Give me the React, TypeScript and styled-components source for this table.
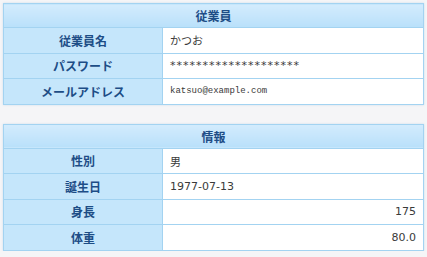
import styled, { createGlobalStyle } from "styled-components";

const GlobalStyle = createGlobalStyle`
  html, body {
    margin: 0;
    padding: 0;
    background: #f5f5f7;
  }
`;

const Page = styled.div`
  display: flex;
  flex-direction: column;
  gap: 19px;
  padding: 3px 3px 0 3px;
  font-family: "DejaVu Sans", "Noto Sans CJK JP", sans-serif;
`;

const Table = styled.table`
  width: 421px;
  border-collapse: collapse;
  background: #fff;
  border: 1px solid #94ccee;
  box-shadow: 0 0 2px rgba(150, 190, 220, 0.4);
`;

const HeadCell = styled.th`
  height: 23px;
  padding: 0;
  border: 1px solid #a3d3f1;
  background: linear-gradient(#d3ecfd, #b9e0fa);
  color: #1d4d86;
  font-family: "Noto Sans CJK JP", sans-serif;
  font-size: 12px;
  font-weight: bold;
  text-align: center;
`;

const Label = styled.th`
  width: 158px;
  height: 24.5px;
  padding: 0;
  border: 1px solid #a3d3f1;
  background: #c5e6fb;
  color: #1d4d86;
  font-family: "Noto Sans CJK JP", sans-serif;
  font-size: 12px;
  font-weight: bold;
  text-align: center;
`;

const Value = styled.td<{ $mono?: boolean; $right?: boolean; $masked?: boolean }>`
  height: 24.5px;
  padding: 0 7px;
  border: 1px solid #a3d3f1;
  background: #fff;
  color: #3a3a3a;
  font-family: ${(p) =>
    p.$mono ? '"Liberation Mono", monospace' : '"DejaVu Sans", "Noto Sans CJK JP", sans-serif'};
  font-size: ${(p) => (p.$mono ? "9px" : "11px")};
  letter-spacing: ${(p) => (p.$masked ? "1px" : "0")};
  text-align: ${(p) => (p.$right ? "right" : "left")};
`;

type Row = { label: string; value: string; mono?: boolean; right?: boolean; masked?: boolean };

const Section = ({ title, rows }: { title: string; rows: Row[] }) => (
  <Table>
    <tbody>
      <tr>
        <HeadCell colSpan={2}>{title}</HeadCell>
      </tr>
      {rows.map((r) => (
        <tr key={r.label}>
          <Label>{r.label}</Label>
          <Value $mono={r.mono} $right={r.right} $masked={r.masked}>
            {r.value}
          </Value>
        </tr>
      ))}
    </tbody>
  </Table>
);

const App = () => (
  <>
    <GlobalStyle />
    <Page>
      <Section
        title="従業員"
        rows={[
          { label: "従業員名", value: "かつお" },
          { label: "パスワード", value: "********************", masked: true },
          { label: "メールアドレス", value: "katsuo@example.com", mono: true },
        ]}
      />
      <Section
        title="情報"
        rows={[
          { label: "性別", value: "男" },
          { label: "誕生日", value: "1977-07-13" },
          { label: "身長", value: "175", right: true },
          { label: "体重", value: "80.0", right: true },
        ]}
      />
    </Page>
  </>
);

export default App;
